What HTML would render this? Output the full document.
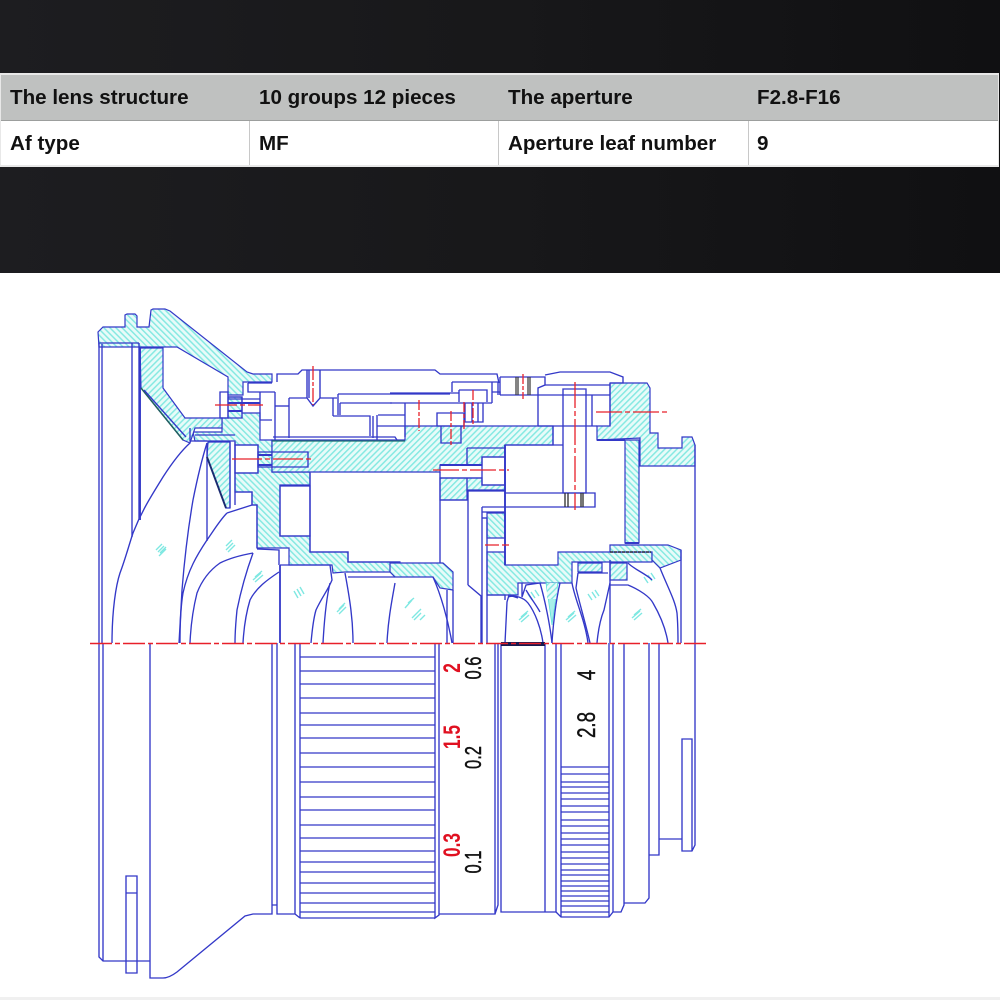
<!DOCTYPE html>
<html><head><meta charset="utf-8"><style>
html,body{margin:0;padding:0;background:#fff}
#p{position:relative;width:1000px;height:1000px;overflow:hidden;background:#fff;font-family:"Liberation Sans",sans-serif}
.dark{position:absolute;left:0;top:0;width:1000px;height:273px;background:linear-gradient(90deg,#1d1d20 0,#18181a 50%,#101012 100%)}
.r{position:absolute;left:1px;width:997px}
.c{position:absolute;font-weight:bold;font-size:20.6px;color:#111;white-space:nowrap;line-height:24px}
.v{position:absolute;width:1px;background:#c8c8c8}
svg{position:absolute;left:0;top:0}
.t{font-family:"Liberation Sans",sans-serif;font-weight:bold;text-anchor:middle}
</style></head><body><div id="p">
<div class="dark"></div>
<div style="position:absolute;left:0;top:73px;width:999px;height:94px;background:#e8e8e8"></div>
<div class="r" style="top:75px;height:45px;background:#bfc1c0"></div>
<div class="r" style="top:120px;height:1px;background:#9c9e9d"></div>
<div class="r" style="top:121px;height:44px;background:#fff"></div>
<div class="v" style="left:249px;top:121px;height:44px"></div>
<div class="v" style="left:498px;top:121px;height:44px"></div>
<div class="v" style="left:748px;top:121px;height:44px"></div>
<div class="c" style="left:10px;top:86px">The lens structure</div>
<div class="c" style="left:259px;top:86px">10 groups 12 pieces</div>
<div class="c" style="left:508px;top:86px">The aperture</div>
<div class="c" style="left:757px;top:86px">F2.8-F16</div>
<div class="c" style="left:10px;top:132px">Af type</div>
<div class="c" style="left:259px;top:132px">MF</div>
<div class="c" style="left:508px;top:132px">Aperture leaf number</div>
<div class="c" style="left:757px;top:132px">9</div>
<svg width="1000" height="1000" viewBox="0 0 1000 1000">
<defs>
<pattern id="h" width="4.3" height="4.3" patternUnits="userSpaceOnUse" patternTransform="rotate(45)"><rect width="4.3" height="4.3" fill="#e8fbf9"/><rect width="1.5" height="4.3" fill="#86e9e2"/></pattern>
<pattern id="g" width="4.3" height="4.3" patternUnits="userSpaceOnUse" patternTransform="rotate(-45)"><rect width="4.3" height="4.3" fill="#e8fbf9"/><rect width="1.5" height="4.3" fill="#86e9e2"/></pattern>
</defs>
<rect x="0" y="997" width="1000" height="3" fill="#f0f0f0"/>
<!-- hatched parts -->
<g fill="url(#g)" stroke="#3338c8" stroke-width="1.2">
<path d="M98 332L103 327H125V315L127 314H135L137 316V327H149L151 310L153 309H165L170 311L247 372L253 374H272V382H243V395H228V377L177 347H99Z"/>
<path d="M228 397H242V413H260V440H272V472H310V485H280V536H310V552H348V562H400V572H345L333 573L332 565H289V548H257V505H252V492H235V473H258V445H235V441H195L193 432H222V418H228Z"/>
<path d="M487 513H505V538H487Z"/>
<path d="M487 552H505V565H558V552H652V562H572V583H518V595H487Z"/>
<path d="M390 563H443L453 572V590L440 588L433 577H395L390 572Z"/>
<path d="M625 440H639V543H625Z"/>
<path d="M612 552H610V545H668L681 550V560L660 568L652 560V552Z"/>
</g>
<g fill="url(#h)" stroke="#3338c8" stroke-width="1.2">
<path d="M140 348H163V388L185 418H222V428H195L190 443L183 440L141 388Z"/>
<path d="M208 442H230V508H226L207 457Z"/>
<path d="M272 440H405V426H553V445H505V457H482V465H440V472H272Z"/>
<path d="M440 478H482V485H505V490H467V500H440Z"/>
<path d="M610 383H647L650 388V433H658V448H682V437H692L695 445V466H640V438L597 440V426H610Z"/>
<path d="M610 563H627V580H610Z"/>
<path d="M578 563H602V572H578Z"/>
</g>
<path d="M546 583H558L552 625Z" fill="#a8efea" stroke="#5de0d8" stroke-width=".8"/>
<rect x="547" y="583" width="10" height="16" fill="url(#h)"/>
<!-- glass hatch marks -->
<g stroke="#7fe8e2" stroke-width="1.4" fill="none">
<path d="M158 552l6-6M160 553l6-6M156 550l6-6M159 556l7-7"/>
<path d="M226 550l7-7M228 552l7-7M226 546l6-6"/>
<path d="M253 580l8-7M255 582l8-7M255 577l7-6"/>
<path d="M298 598l-4-7M301 596l-4-7M304 594l-4-7"/>
<path d="M337 612l7-7M339 614l7-7M339 609l6-6"/>
<path d="M412 618l7-7M414 620l7-7M416 614l5-5"/>
<path d="M408 603l6-5M412 600l-7 8M420 620l5-5"/>
<path d="M519 620l8-7M521 622l8-7M521 617l7-6"/>
<path d="M535 598l-4-6M539 596l-4-6M532 600l-4-6"/>
<path d="M566 620l8-7M568 622l8-7M568 617l7-6"/>
<path d="M592 600l-4-6M596 598l-4-6M599 596l-4-6"/>
<path d="M632 618l8-7M634 620l8-7M634 615l7-6"/>
<path d="M648 583l-4-6M652 581l-4-6M655 579l-4-6"/>
</g>
<!-- lines -->
<g fill="none" stroke="#3338c8" stroke-width="1.35">
<!-- lens curves left -->
<path d="M112 643C112 610 116 585 120 573C125 560 129 545 133 533C142 510 152 495 163 477C172 463 180 452 190 443"/>
<path d="M207 443C200 465 196 485 193 500C187 535 184 565 182 590C181 610 180 625 179 643"/>
<path d="M180 643C180 620 181 605 183 593C188 570 197 555 207 540C214 530 220 520 227 513"/>
<path d="M227 513L252 505"/>
<path d="M253 553C245 575 241 590 237 610C236 620 235 632 235 643"/>
<path d="M190 643C191 620 194 605 197 593C202 580 210 570 220 563C230 558 242 555 253 553"/>
<path d="M243 643C244 625 247 610 250 600C256 588 267 580 279 572"/>
<path d="M257 549L279 550V565"/>
<path d="M280 565H330L332 580C328 590 322 597 316 610C313 620 312 632 311 643"/>
<path d="M330 583C326 600 324 625 323 643"/>
<path d="M280 565V643" stroke-width="1.8"/>
<path d="M345 573C350 600 353 620 353 643"/>
<path d="M387 643C388 620 392 600 395 583"/>
<path d="M348 577H395"/>
<path d="M433 577C441 595 448 620 452 643"/>
<path d="M447 590V643"/>
<path d="M453 590V643"/>
<!-- lens curves right -->
<path d="M505 643L507 602L509 595L518 598"/>
<path d="M508 597C515 595 523 597 528 603C535 612 541 628 543 643"/>
<path d="M522 583V597L526 585L540 583"/>
<path d="M526 590C532 600 537 606 540 612"/>
<path d="M540 583C545 600 550 625 552 643"/>
<path d="M560 583C556 600 553 625 552 643"/>
<path d="M572 583C575 600 585 620 588 643"/>
<path d="M578 573H608"/>
<path d="M578 573L576 588C580 605 586 625 590 643"/>
<path d="M610 583L604 610C600 620 598 632 597 643"/>
<path d="M610 560V643"/>
<path d="M610 585H628C640 590 650 597 653 603C660 615 666 630 668 643"/>
<path d="M628 563C632 568 648 575 652 580"/>
<path d="M660 568C668 588 675 600 677 613C678 625 678 635 678 643"/>
<path d="M681 550V643"/>
<path d="M695 445V845L692 851H682V739H692V851"/>
<!-- structural left -->
<path d="M99 343V643"/><path d="M102 344V643"/>
<path d="M99 343H139"/><path d="M132 343V537"/><path d="M139 343V520"/>
<path d="M140 348V520" stroke-width="1.9"/>
<path d="M141 388L183 440" stroke="#226060" stroke-width="1.5"/>
<path d="M144 390L186 437"/>
<path d="M207 443V541"/>
<path d="M230 442V508"/><path d="M235 442V505"/>
<path d="M235 492H252V505"/><path d="M252 505H257V548"/>
<path d="M195 435H235"/><path d="M190 428V441H207"/>
<path d="M207 457L226 508" stroke="#1a2a70" stroke-width="1.9"/>
<path d="M220 392H228V418H220Z"/>
<path d="M228 397H242V418H228"/>
<path d="M228 403H260M228 411H242" stroke-width="1.9"/>
<path d="M228 399H260"/>
<path d="M235 445H258V473H235Z"/>
<path d="M258 452H308V467H258Z"/>
<path d="M258 455H272M258 465H272" stroke-width="1.9"/>
<path d="M280 486H310V536H280Z"/>
<path d="M310 473V552H348V562H400"/>
<path d="M248 383V392H275"/><path d="M248 383H272"/>
<path d="M260 392V420H272"/>
<path d="M275 392V440"/>
<path d="M277 382V374H298L302 370H435L440 374H497L499 383"/>
<path d="M275 406H289"/>
<path d="M289 398V438"/>
<path d="M289 398H307L313 406L320 398H337"/>
<path d="M307 370V398M309 370V398M320 370V398" stroke-width="1.4"/>
<path d="M338 394H450"/><path d="M338 394V415"/><path d="M333 398V416"/>
<path d="M340 403V415M340 403H392"/>
<path d="M333 416H370V436"/>
<path d="M373 416V438"/>
<path d="M377 415V440"/><path d="M377 426H405V437"/><path d="M378 415H405"/>
<path d="M273 437H395L397 440"/>
<path d="M272 441H405" stroke="#1f6f6f"/>
<!-- structural middle -->
<path d="M452 382H498V395"/><path d="M452 382V392"/>
<path d="M459 390H487V402"/><path d="M459 390V402"/>
<path d="M390 393H459"/><path d="M390 403H492"/>
<path d="M492 382V403"/><path d="M492 392H500V395"/>
<path d="M405 403V426"/>
<path d="M465 403V422H483V403"/><path d="M472 403V422M478 403V422"/>
<path d="M437 413H464V426H437Z"/>
<path d="M441 426V443H461V426"/>
<path d="M440 472V563"/>
<path d="M440 478H482"/>
<path d="M440 465H482" stroke-width="1.9"/>
<path d="M467 448H505"/><path d="M467 448V465"/>
<path d="M482 457H505V485H482Z"/>
<path d="M467 478V491H505"/><path d="M467 500H440"/>
<path d="M468 491V585"/>
<path d="M468 585L481 596V643"/>
<path d="M482 507H505"/><path d="M482 507V643"/>
<path d="M482 512H505"/>
<path d="M487 518V643"/><path d="M482 518H487"/>
<path d="M487 595H505V600"/>
<path d="M505 445V565" stroke-width="1.9"/>
<path d="M500 377H545V385L538 388V426"/><path d="M500 395H538"/><path d="M500 377V395"/>
<path d="M545 375L560 372H610L623 377V383H610"/>
<path d="M545 385H610"/>
<path d="M538 395H610"/>
<path d="M563 389H586V493H563Z"/>
<path d="M592 395V426"/>
<path d="M610 383V426"/>
<path d="M553 426V445"/>
<path d="M505 445H563"/>
<path d="M538 426H597"/>
<path d="M505 493H595V507H505"/>
<path d="M516 377V395M518 377V395M528 377V395M530 377V395" stroke="#333" stroke-width="1.2"/>
<path d="M565 493V507M568 493V507M581 493V507M583 493V507" stroke="#333"/>
<path d="M597 440L625 440" stroke-width="2"/>
<path d="M625 543H639" stroke-width="2"/>
<path d="M610 552H651" stroke="#222" stroke-dasharray="3 1"/>
<!-- lower half -->
<path d="M99 643V957L103 961H150"/><path d="M103 643V961"/>
<path d="M126 876H137V973H126ZM126 893H137"/>
<path d="M150 643V978H163C168 978 173 975 177 972L245 916L253 914H272V643"/>
<path d="M272 905H277M277 643V914H295V643M295 914L300 918M300 643V918"/>
<path d="M300 657H435M300 671H435M300 684H435M300 698H435M300 713H435M300 725H435M300 738H435M300 753H435M300 767H435M300 782H435M300 797H435M300 810H435M300 825H435M300 838H435M300 851H435M300 862H435M300 872H435M300 883H435M300 893H435M300 903H435M300 912H435M300 918H435"/>
<path d="M435 643V918L439 915V643M439 914H495V643M495 914L498 905V643"/>
<path d="M501 643V912H545V643M545 912H556V643"/>
<path d="M556 912L561 917H609L613 912H621L624 905V643"/>
<path d="M561 643V917M609 643V917M613 643V912"/>
<path d="M561 767H609M561 774H609M561 782H609M561 787H609M561 793H609M561 799H609M561 806H609M561 812H609M561 820H609M561 826H609M561 833H609M561 839H609M561 845H609M561 852H609M561 858H609M561 864H609M561 870H609M561 875H609M561 881H609M561 886H609M561 891H609M561 896H609M561 901H609M561 906H609M561 912H609"/>
<path d="M624 903H645L649 898V643"/>
<path d="M649 855H659V643"/><path d="M659 839H682"/>
</g>
<rect x="501" y="642" width="44" height="4" fill="#181a50"/>
<!-- red -->
<g fill="none" stroke="#e8202a" stroke-width="1.3">
<path d="M90 643.5H707" stroke-width="1.5" stroke-dasharray="22 3 5 3"/>
<path d="M313 366V405" stroke-dasharray="14 2 4 2"/>
<path d="M215 405H263" stroke-dasharray="22 3 5 3"/>
<path d="M232 459H313" stroke-dasharray="30 3 5 3"/>
<path d="M419 400V431" stroke-dasharray="10 2 4 2"/>
<path d="M451 411V447" stroke-dasharray="10 2 4 2"/>
<path d="M464 402V429M473 390V425" stroke-dasharray="10 2 4 2"/>
<path d="M523 374V399" stroke-dasharray="10 2 4 2"/>
<path d="M575 382V510" stroke-dasharray="26 3 5 3"/>
<path d="M596 412H670" stroke-dasharray="26 3 5 3"/>
<path d="M433 470H509" stroke-dasharray="26 3 5 3"/>
<path d="M485 545H509" stroke-dasharray="14 3"/>
</g>
<!-- scale numbers -->
<g class="t">
<text class="t" transform="translate(460 668) rotate(-90) scale(.72 1)" font-size="24" fill="#e01020">2</text>
<text class="t" transform="translate(460 737) rotate(-90) scale(.72 1)" font-size="24" fill="#e01020">1.5</text>
<text class="t" transform="translate(460 845) rotate(-90) scale(.72 1)" font-size="24" fill="#e01020">0.3</text>
<text transform="translate(481 668) rotate(-90) scale(.72 1)" font-size="23" fill="#111" stroke="#111" stroke-width=".45" text-anchor="middle" font-family="Liberation Sans" font-weight="normal">0.6</text>
<text transform="translate(481 757.5) rotate(-90) scale(.72 1)" font-size="23" fill="#111" stroke="#111" stroke-width=".45" text-anchor="middle" font-family="Liberation Sans" font-weight="normal">0.2</text>
<text transform="translate(481 862) rotate(-90) scale(.72 1)" font-size="23" fill="#111" stroke="#111" stroke-width=".45" text-anchor="middle" font-family="Liberation Sans" font-weight="normal">0.1</text>
<text transform="translate(595 675) rotate(-90) scale(.75 1)" font-size="25" fill="#111" stroke="#111" stroke-width=".45" text-anchor="middle" font-family="Liberation Sans" font-weight="normal">4</text>
<text transform="translate(595 725) rotate(-90) scale(.75 1)" font-size="25" fill="#111" stroke="#111" stroke-width=".45" text-anchor="middle" font-family="Liberation Sans" font-weight="normal">2.8</text>
</g>
</svg>
</div></body></html>
